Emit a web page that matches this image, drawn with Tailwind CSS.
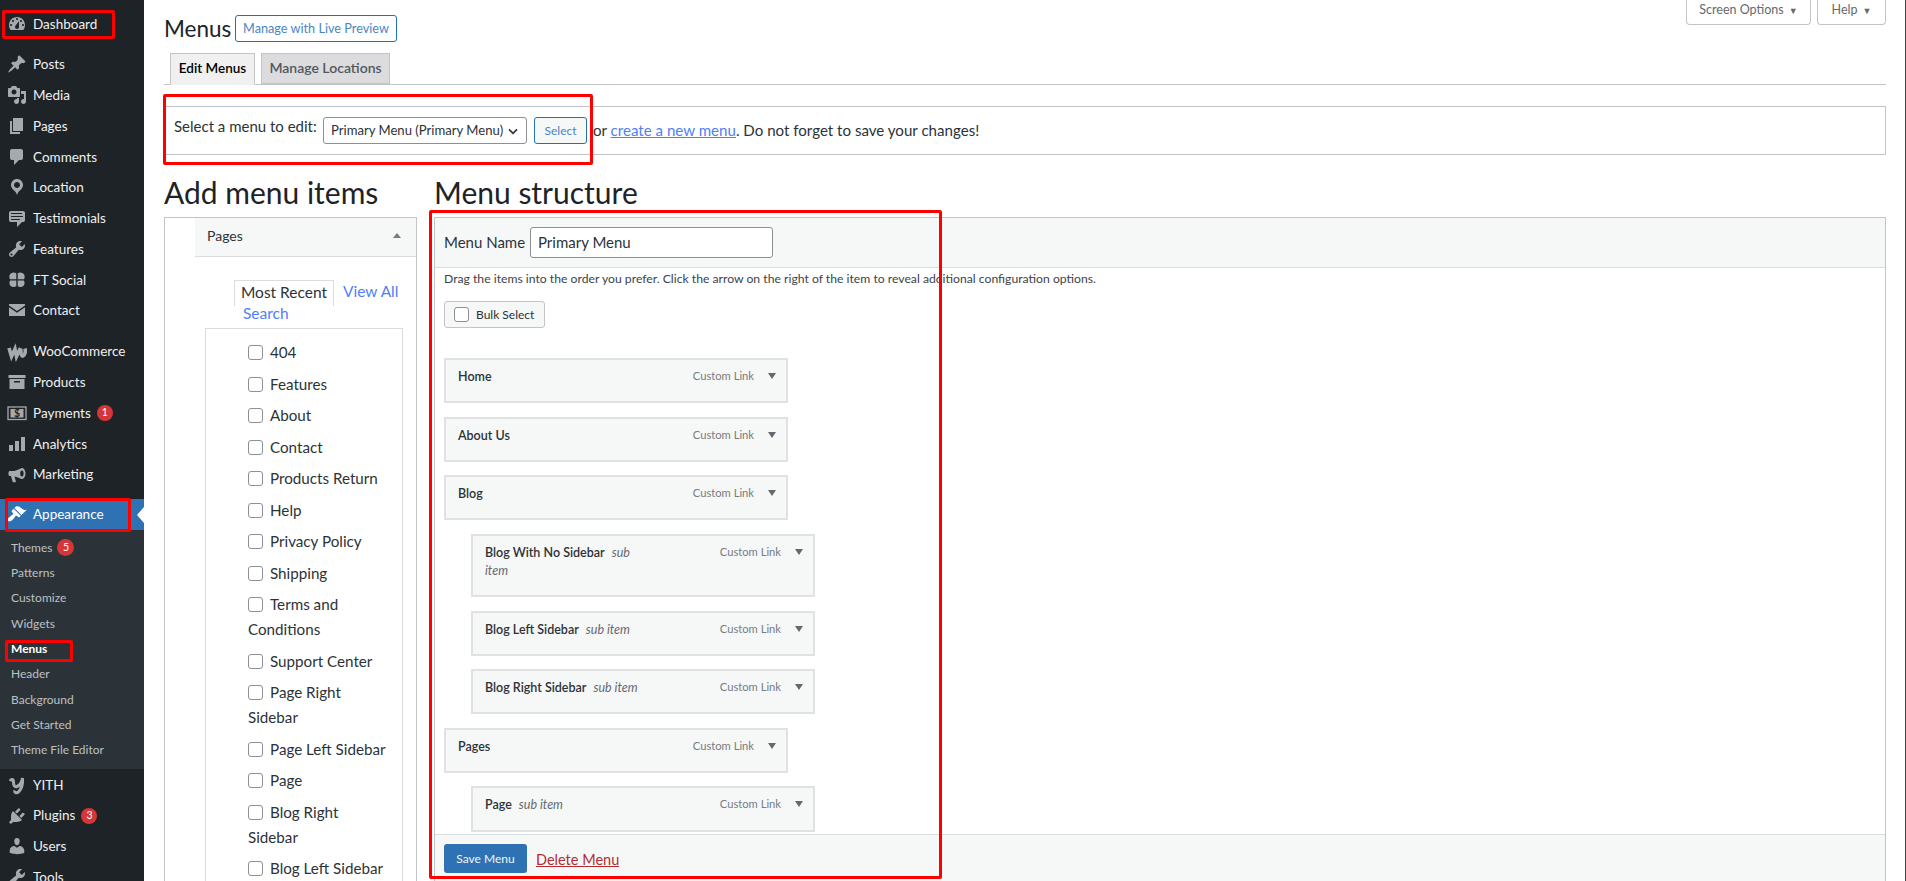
<!DOCTYPE html>
<html lang="en">
<head>
    <meta charset="UTF-8">
    <title>Menus</title>
    <script src="https://cdn.jsdelivr.net/npm/@tailwindcss/browser@4"></script>
</head>
<body class="bg-white font-['Lato',sans-serif] text-[#2c3338]">
<div class="relative flex h-[881px] w-[1906px] overflow-hidden border-r border-[#444]">

    <!-- sidebar -->
    <aside class="w-[144px] shrink-0 bg-[#1d2327] text-[13.5px] text-[#f0f0f1]">
        <div class="pt-[9px]"></div>
        <a class="flex h-[30.75px] items-center gap-[6px] pl-[7px]"><svg class="h-5 w-5 fill-[#a7aaad]" viewBox="0 0 20 20"><path fill-rule="evenodd" d="M3.76 16h12.48c1.1-1.37 1.76-3.11 1.76-5 0-4.42-3.58-8-8-8s-8 3.58-8 8c0 1.89.66 3.63 1.76 5zM10 4c.55 0 1 .45 1 1s-.45 1-1 1-1-.45-1-1 .45-1 1-1zM6 6c.55 0 1 .45 1 1s-.45 1-1 1-1-.45-1-1 .45-1 1-1zm8 0c.55 0 1 .45 1 1s-.45 1-1 1-1-.45-1-1 .45-1 1-1zm-5.37 5.55L12 7v6c0 1.1-.9 2-2 2s-2-.9-2-2c0-.57.24-1.08.63-1.45zM4 10c.55 0 1 .45 1 1s-.45 1-1 1-1-.45-1-1 .45-1 1-1zm12 0c.55 0 1 .45 1 1s-.45 1-1 1-1-.45-1-1 .45-1 1-1z"/></svg>Dashboard</a>
        <div class="h-[9.25px]"></div>
        <a class="flex h-[30.75px] items-center gap-[6px] pl-[7px]"><svg class="h-5 w-5 fill-[#a7aaad]" viewBox="0 0 20 20"><path d="M10.44 3.02l1.82-1.82 6.36 6.35-1.83 1.82c-1.05-.68-2.48-.57-3.41.36l-.75.75c-.92.93-1.04 2.35-.35 3.41l-1.83 1.82-2.41-2.41-2.8 2.79c-.42.42-3.38 2.71-3.8 2.29s1.86-3.39 2.28-3.81l2.79-2.79L4.1 9.36l1.83-1.82c1.05.69 2.48.57 3.4-.36l.75-.75c.93-.92 1.05-2.35.36-3.41z"/></svg>Posts</a>
        <a class="flex h-[30.75px] items-center gap-[6px] pl-[7px]"><svg class="h-5 w-5 fill-[#a7aaad]" viewBox="0 0 20 20"><path fill-rule="evenodd" d="M13 11V4c0-.55-.45-1-1-1h-1.67L9 1H5L3.67 3H2c-.55 0-1 .45-1 1v7c0 .55.45 1 1 1h10c.55 0 1-.45 1-1zM7 4.5c1.38 0 2.5 1.12 2.5 2.5S8.38 9.5 7 9.5 4.5 8.38 4.5 7 5.62 4.5 7 4.5zM14 6h5v10.5c0 1.38-1.12 2.5-2.5 2.5S14 17.88 14 16.5s1.12-2.5 2.5-2.5c.17 0 .34.02.5.05V9h-3V6zm-4 8.05V13h2v3.5c0 1.38-1.12 2.5-2.5 2.5S7 17.88 7 16.5 8.12 14 9.5 14c.17 0 .34.02.5.05z"/></svg>Media</a>
        <a class="flex h-[30.75px] items-center gap-[6px] pl-[7px]"><svg class="h-5 w-5 fill-[#a7aaad]" viewBox="0 0 20 20"><path d="M6 15V2h10v13H6zm-1 1h8v2H3V5h2v11z"/></svg>Pages</a>
        <a class="flex h-[30.75px] items-center gap-[6px] pl-[7px]"><svg class="h-5 w-5 fill-[#a7aaad]" viewBox="0 0 20 20"><path d="M5 2h9c1.1 0 2 .9 2 2v7c0 1.1-.9 2-2 2h-2l-5 5v-5H5c-1.1 0-2-.9-2-2V4c0-1.1.9-2 2-2z"/></svg>Comments</a>
        <a class="flex h-[30.75px] items-center gap-[6px] pl-[7px]"><svg class="h-5 w-5 fill-[#a7aaad]" viewBox="0 0 20 20"><path fill-rule="evenodd" d="M10 2C6.69 2 4 4.69 4 8c0 2.02 1.17 3.71 2.53 4.89.43.37 1.18.96 1.85 1.83.74.97 1.14 1.78 1.62 3.28.48-1.5.88-2.31 1.62-3.28.67-.87 1.42-1.46 1.85-1.83C14.83 11.71 16 10.02 16 8c0-3.31-2.69-6-6-6zm0 2.99c1.66 0 3 1.35 3 3.01 0 1.66-1.34 3-3 3s-3-1.34-3-3c0-1.66 1.34-3.01 3-3.01z"/></svg>Location</a>
        <a class="flex h-[30.75px] items-center gap-[6px] pl-[7px]"><svg class="h-5 w-5 fill-[#a7aaad]" viewBox="0 0 20 20"><path fill-rule="evenodd" d="M4 3h12c.55 0 1.02.2 1.41.59S18 4.45 18 5v7c0 .55-.2 1.02-.59 1.41S16.55 14 16 14h-1l-5 5v-5H4c-.55 0-1.02-.2-1.41-.59S2 12.55 2 12V5c0-.55.2-1.02.59-1.41S3.45 3 4 3zm11 2H4v1h11V5zm1 3H4v1h12V8zm-3 3H4v1h9v-1z"/></svg>Testimonials</a>
        <a class="flex h-[30.75px] items-center gap-[6px] pl-[7px]"><svg class="h-5 w-5 fill-[#a7aaad]" viewBox="0 0 20 20"><path fill-rule="evenodd" d="M16.68 9.77c-1.34 1.34-3.3 1.67-4.95.99l-5.41 6.52c-.99.99-2.59.99-3.58 0s-.99-2.59 0-3.57l6.52-5.42c-.68-1.65-.35-3.61.99-4.95 1.28-1.28 3.12-1.62 4.72-1.06l-2.89 2.89 2.82 2.82 2.86-2.87c.53 1.58.18 3.39-1.08 4.65zM3.81 16.21c.4.39 1.04.39 1.43 0 .4-.4.4-1.04 0-1.43-.39-.4-1.03-.4-1.43 0-.39.39-.39 1.03 0 1.43z"/></svg>Features</a>
        <a class="flex h-[30.75px] items-center gap-[6px] pl-[7px]"><svg class="h-5 w-5 fill-[#a7aaad]" viewBox="0 0 20 20"><path d="M9.3 3.2C7 1.8 3.6 2.4 2.6 5c-.4 1.2-.3 3 .3 4.2h6.4zM10.7 3.2c2.3-1.4 5.7-.8 6.7 1.8.4 1.2.3 3-.3 4.2h-6.4zM9.3 10.4H3.1c-.9 1.6-.9 3.7.2 5.1 1.3 1.6 3.8 2 6 .8zM10.7 10.4h6.2c.9 1.6.9 3.7-.2 5.1-1.3 1.6-3.8 2-6 .8z"/></svg>FT Social</a>
        <a class="flex h-[30.75px] items-center gap-[6px] pl-[7px]"><svg class="h-5 w-5 fill-[#a7aaad]" viewBox="0 0 20 20"><path d="M2 4h16v1.4L10 11 2 5.4V4zm0 3.2l8 5.6 8-5.6V16H2V7.2z"/></svg>Contact</a>
        <div class="h-[10.4px]"></div>
        <a class="flex h-[30.75px] items-center gap-[6px] pl-[7px]"><svg class="h-5 w-5 fill-none stroke-[#a7aaad] stroke-[3.6]" viewBox="0 0 20 20"><path d="M2 6l2.500 8.500 3.500-7.500 1.500 7.500 4-8.500M14 6.500c-.5 4.500.5 8 2 7.500 1.800-.6 2.800-4.500 2-7.500"/></svg>WooCommerce</a>
        <a class="flex h-[30.75px] items-center gap-[6px] pl-[7px]"><svg class="h-5 w-5 fill-[#a7aaad]" viewBox="0 0 20 20"><path fill-rule="evenodd" d="M1.5 3h17v3h-17zM2.5 7h15v10h-15zM7 9v1.5h6V9z"/></svg>Products</a>
        <a class="flex h-[30.75px] items-center gap-[6px] pl-[7px]"><svg class="h-5 w-5" viewBox="0 0 20 20"><rect x="1" y="4" width="18" height="12.5" class="fill-none stroke-[#a7aaad] stroke-[1.3]"/><rect x="3.5" y="6" width="13" height="8.5" class="fill-[#a7aaad]"/><text x="10" y="13.800" text-anchor="middle" class="fill-[#1d2327] text-[10.500px] font-bold">$</text></svg><span>Payments</span><span class="flex h-[16px] w-[16px] items-center justify-center rounded-full bg-[#d63638] text-[10.500px] text-white">1</span></a>
        <a class="flex h-[30.75px] items-center gap-[6px] pl-[7px]"><svg class="h-5 w-5 fill-[#a7aaad]" viewBox="0 0 20 20"><path d="M2 11h4v6H2zM8 7h4v10H8zM14 3h4v14h-4z"/></svg>Analytics</a>
        <a class="flex h-[30.75px] items-center gap-[6px] pl-[7px]"><svg class="h-5 w-5 fill-[#a7aaad]" viewBox="0 0 20 20"><path fill-rule="evenodd" d="M18.500 8.500c0 3-1.600 5.500-3.600 5.500-.6 0-4-2-7.400-2.600l1.400 5.100c.1.400-.2.700-.6.700H6.200c-.3 0-.5-.2-.6-.4L4 11H3c-.8 0-1.500-.7-1.500-1.500v-2C1.500 6.700 2.200 6 3 6h4c3.500-.4 7.300-3 7.900-3 2 0 3.600 2.500 3.600 5.500zM14.900 5.500c-1 0-1.700 1.300-1.700 3s.7 3 1.700 3 1.700-1.300 1.700-3-.7-3-1.700-3z"/></svg>Marketing</a>
        <div class="h-[8.8px]"></div>
        <a class="relative flex h-[31px] items-center gap-[6px] bg-[#2f72b3] pl-[7px] text-white"><svg class="h-5 w-5 fill-white" viewBox="0 0 20 20"><path d="M14.48 11.06L7.41 3.99l1.5-1.5c.5-.56 2.3-.47 3.51.32 1.21.8 1.43 1.28 2.91 2.1 1.18.64 2.45 1.26 4.45.85zm-.71.71L6.7 4.7 4.93 6.47c-.39.39-.39 1.02 0 1.41l1.06 1.06c.39.39.39 1.03 0 1.42-.6.6-1.43 1.11-2.21 1.69-.35.26-.7.53-1.01.84C1.43 13.23 0 15.500 1.05 16.950c1.46 1.050 3.720-.38 5.060-1.720.31-.31.58-.66.84-1.010.58-.78 1.090-1.610 1.690-2.210.39-.39 1.020-.39 1.410 0l1.060 1.060c.39.39 1.020.39 1.410 0z"/></svg>Appearance<span class="absolute right-0 top-[8px] border-y-[8px] border-r-[7px] border-y-transparent border-r-white"></span></a>
        <div class="h-[239.8px] bg-[#2c3338] pt-[5.4px] pl-[11px] text-[12px] text-[#bcc0c4]">
            <a class="flex h-[25.3px] items-center gap-[5px]">Themes<span class="flex h-[17px] w-[17px] items-center justify-center rounded-full bg-[#d63638] text-[10.500px] text-white">5</span></a>
            <a class="flex h-[25.3px] items-center">Patterns</a>
            <a class="flex h-[25.3px] items-center">Customize</a>
            <a class="flex h-[25.3px] items-center">Widgets</a>
            <a class="flex h-[25.3px] items-center font-bold text-white">Menus</a>
            <a class="flex h-[25.3px] items-center">Header</a>
            <a class="flex h-[25.3px] items-center">Background</a>
            <a class="flex h-[25.3px] items-center">Get Started</a>
            <a class="flex h-[25.3px] items-center">Theme File Editor</a>
        </div>
        <a class="flex h-[30.75px] items-center gap-[6px] pl-[7px]"><svg class="h-5 w-5 fill-none stroke-[#a7aaad] stroke-[3]" viewBox="0 0 20 20"><path d="M3 6c1.500-2.500 3.500-2 3.500 1s1 5.500 3.500 4.500 5-4.500 5.500-8.500M15.500 3c.5 6.500-1 11-4 14-2 1.500-4.500.5-3.500-1.500"/></svg>YITH</a>
        <a class="flex h-[30.75px] items-center gap-[6px] pl-[7px]"><svg class="h-5 w-5 fill-[#a7aaad]" viewBox="0 0 20 20"><path d="M13.11 4.36L9.87 7.600 8 5.730l3.240-3.240c.35-.34 1.050-.2 1.560.32.52.51.66 1.210.31 1.550zm-8 1.770l.91-1.120 9.010 9.010-1.190.84c-.71.71-2.630 1.160-3.820 1.160H6.140L4.900 17.260c-.59.59-1.540.59-2.120 0-.59-.58-.59-1.530 0-2.120l1.240-1.240v-3.880c0-1.130.4-3.190 1.090-3.890zm7.260 3.970l3.240-3.240c.34-.35 1.040-.21 1.550.31.52.51.66 1.210.31 1.550l-3.240 3.250z"/></svg><span>Plugins</span><span class="flex h-[16px] w-[16px] items-center justify-center rounded-full bg-[#d63638] text-[10.500px] text-white">3</span></a>
        <a class="flex h-[30.75px] items-center gap-[6px] pl-[7px]"><svg class="h-5 w-5 fill-[#a7aaad]" viewBox="0 0 20 20"><path d="M10 9.250c-2.270 0-2.730-3.440-2.730-3.440C7 4.020 7.820 2 9.970 2c2.160 0 2.980 2.020 2.710 3.810 0 0-.41 3.440-2.680 3.440zm0 2.570L12.720 10c2.390 0 4.520 2.330 4.520 4.530v2.490s-3.650 1.130-7.240 1.130c-3.650 0-7.240-1.130-7.240-1.130v-2.490c0-2.250 1.940-4.480 4.470-4.480z"/></svg>Users</a>
        <a class="flex h-[30.75px] items-center gap-[6px] pl-[7px]"><svg class="h-5 w-5 fill-[#a7aaad]" viewBox="0 0 20 20"><path fill-rule="evenodd" d="M16.680 9.770c-1.340 1.340-3.300 1.670-4.950.99l-5.410 6.520c-.99.99-2.590.99-3.580 0s-.99-2.590 0-3.570l6.520-5.420c-.68-1.650-.35-3.610.99-4.950 1.280-1.280 3.120-1.620 4.720-1.060l-2.890 2.890 2.820 2.820 2.860-2.870c.53 1.580.18 3.390-1.080 4.650z"/></svg>Tools</a>
    </aside>

    <!-- content -->
    <main class="w-[1761px] shrink-0 pl-[20px] pr-[19px]">
        <div class="flex h-[53px] items-start">
            <h1 class="mt-[16px] w-[71px] text-[22.500px] leading-[26px] text-[#1d2327]">Menus</h1>
            <a class="mt-[15px] flex h-[27px] w-[162px] items-center justify-center rounded-[3px] border border-[#2271b1] text-[12.700px] text-[#4a86c5]">Manage with Live Preview</a>
            <a class="ml-auto flex h-[25px] w-[125px] items-center justify-center gap-[5px] rounded-b-[4px] border border-t-0 border-[#c3c4c7] pb-[3px] text-[12.500px] text-[#646970]">Screen Options <span class="text-[9px]">▼</span></a>
            <a class="ml-[6px] flex h-[25px] w-[69px] items-center justify-center gap-[5px] rounded-b-[4px] border border-t-0 border-[#c3c4c7] pb-[3px] text-[12.500px] text-[#646970]">Help <span class="text-[9px]">▼</span></a>
        </div>

        <div class="flex h-[32px] border-b border-[#c3c4c7] pl-[6px]">
            <a class="flex h-[32px] w-[85px] items-center justify-center border border-[#c3c4c7] border-b-[#f0f0f1] bg-[#f0f0f1] pb-[2px] text-[13.500px] font-semibold text-black">Edit Menus</a>
            <a class="ml-[6px] flex h-[31px] w-[129px] items-center justify-center border border-[#c3c4c7] bg-[#dcdcde] pb-[2px] text-[14px] font-semibold text-[#50575e]">Manage Locations</a>
        </div>

        <div class="mt-[21px] flex h-[49px] items-center border border-[#c3c4c7] pl-[9px] text-[15.100px] text-[#2c3338]">
            <span class="mb-[9px] w-[149px] whitespace-nowrap text-[15px]">Select a menu to edit:</span>
            <div class="flex h-[27px] w-[204px] items-center justify-between whitespace-nowrap rounded-[3px] border border-[#8c8f94] pl-[7px] pr-[5px] text-[13.100px] text-[#2c3338]">Primary Menu (Primary Menu)<svg class="h-4 w-4 shrink-0 fill-none stroke-[#2c3338] stroke-[2]" viewBox="0 0 20 20"><path d="M5 8l5 5 5-5"/></svg></div>
            <a class="ml-[7px] flex h-[27px] w-[53px] items-center justify-center rounded-[3px] border border-[#2271b1] bg-[#f6f7f7] text-[12px] text-[#4a86c5]">Select</a>
            <span class="ml-[6px]">or <a class="text-[#4f80f7] underline">create a new menu</a>. Do not forget to save your changes!</span>
        </div>

        <div class="mt-[21px] flex gap-[17px]">
            <section class="w-[253px] shrink-0">
                <h2 class="h-[41px] text-[30px] leading-[33px] text-[#1d2327]">Add menu items</h2>
                <div class="h-[700px] border border-[#c3c4c7] pl-[30px]">
                    <div class="flex h-[39px] items-center justify-between border-b border-[#dcdcde] bg-[#f6f7f7] pb-[3px] pl-[12px] pr-[15px] text-[14px] text-[#2c3338]">Pages<span class="border-x-[4px] border-b-[5px] border-x-transparent border-b-[#787c82]"></span></div>
                    <div class="ml-[39px] mt-[23px] flex h-[26px] items-start text-[15.500px]">
                        <span class="flex h-[26px] w-[100px] items-center justify-center border border-b-0 border-[#dcdcde] pb-[2px] text-[#2c3338]">Most Recent</span>
                        <a class="ml-[9px] leading-[22px] text-[#4f80f7]">View All</a>
                    </div>
                    <a class="ml-[48px] block h-[22px] text-[15.500px] leading-[14px] text-[#4f80f7]">Search</a>
                    <div class="ml-[10px] h-[560px] w-[198px] border border-[#dcdcde] pl-[42px] pt-[11px] text-[15.200px] leading-[25px] text-[#2c3338]">
                        <label class="mb-[6.500px] block"><input type="checkbox" class="mr-[7px] inline-block h-[15px] w-[15px] appearance-none rounded-[3px] border border-[#8c8f94] bg-white align-[-2px]">404</label>
                        <label class="mb-[6.500px] block"><input type="checkbox" class="mr-[7px] inline-block h-[15px] w-[15px] appearance-none rounded-[3px] border border-[#8c8f94] bg-white align-[-2px]">Features</label>
                        <label class="mb-[6.500px] block"><input type="checkbox" class="mr-[7px] inline-block h-[15px] w-[15px] appearance-none rounded-[3px] border border-[#8c8f94] bg-white align-[-2px]">About</label>
                        <label class="mb-[6.500px] block"><input type="checkbox" class="mr-[7px] inline-block h-[15px] w-[15px] appearance-none rounded-[3px] border border-[#8c8f94] bg-white align-[-2px]">Contact</label>
                        <label class="mb-[6.500px] block"><input type="checkbox" class="mr-[7px] inline-block h-[15px] w-[15px] appearance-none rounded-[3px] border border-[#8c8f94] bg-white align-[-2px]">Products Return</label>
                        <label class="mb-[6.500px] block"><input type="checkbox" class="mr-[7px] inline-block h-[15px] w-[15px] appearance-none rounded-[3px] border border-[#8c8f94] bg-white align-[-2px]">Help</label>
                        <label class="mb-[6.500px] block"><input type="checkbox" class="mr-[7px] inline-block h-[15px] w-[15px] appearance-none rounded-[3px] border border-[#8c8f94] bg-white align-[-2px]">Privacy Policy</label>
                        <label class="mb-[6.500px] block"><input type="checkbox" class="mr-[7px] inline-block h-[15px] w-[15px] appearance-none rounded-[3px] border border-[#8c8f94] bg-white align-[-2px]">Shipping</label>
                        <label class="mb-[6.500px] block"><input type="checkbox" class="mr-[7px] inline-block h-[15px] w-[15px] appearance-none rounded-[3px] border border-[#8c8f94] bg-white align-[-2px]">Terms and<br>Conditions</label>
                        <label class="mb-[6.500px] block"><input type="checkbox" class="mr-[7px] inline-block h-[15px] w-[15px] appearance-none rounded-[3px] border border-[#8c8f94] bg-white align-[-2px]">Support Center</label>
                        <label class="mb-[6.500px] block"><input type="checkbox" class="mr-[7px] inline-block h-[15px] w-[15px] appearance-none rounded-[3px] border border-[#8c8f94] bg-white align-[-2px]">Page Right<br>Sidebar</label>
                        <label class="mb-[6.500px] block"><input type="checkbox" class="mr-[7px] inline-block h-[15px] w-[15px] appearance-none rounded-[3px] border border-[#8c8f94] bg-white align-[-2px]">Page Left Sidebar</label>
                        <label class="mb-[6.500px] block"><input type="checkbox" class="mr-[7px] inline-block h-[15px] w-[15px] appearance-none rounded-[3px] border border-[#8c8f94] bg-white align-[-2px]">Page</label>
                        <label class="mb-[6.500px] block"><input type="checkbox" class="mr-[7px] inline-block h-[15px] w-[15px] appearance-none rounded-[3px] border border-[#8c8f94] bg-white align-[-2px]">Blog Right<br>Sidebar</label>
                        <label class="mb-[6.500px] block"><input type="checkbox" class="mr-[7px] inline-block h-[15px] w-[15px] appearance-none rounded-[3px] border border-[#8c8f94] bg-white align-[-2px]">Blog Left Sidebar</label>
                    </div>
                </div>
            </section>

            <section class="w-[1452px] shrink-0">
                <h2 class="h-[41px] text-[30px] leading-[33px] text-[#1d2327]">Menu structure</h2>
                <div class="h-[700px] border border-[#c3c4c7]">
                    <div class="flex h-[50px] items-center border-b border-[#dcdcde] bg-[#f6f7f7] pl-[9px]">
                        <span class="mb-[1px] w-[86px] text-[15px]">Menu Name</span>
                        <input value="Primary Menu" class="h-[31px] w-[243px] rounded-[3px] border border-[#8c8f94] bg-white px-[7px] pb-[2px] text-[15px] text-[#2c3338]">
                    </div>
                    <p class="ml-[9px] mt-[1px] h-[32px] text-[12.200px] leading-[20px] text-[#3c434a]">Drag the items into the order you prefer. Click the arrow on the right of the item to reveal additional configuration options.</p>
                    <div class="ml-[9px] flex h-[27px] w-[101px] items-center rounded-[3px] border border-[#c3c4c7] bg-[#f6f7f7] pl-[9px] text-[12px]"><input type="checkbox" class="mr-[7px] h-[15px] w-[15px] appearance-none rounded-[3px] border border-[#8c8f94] bg-white">Bulk Select</div>

                    <div class="mt-[30px] pl-[9px]">
                        <div class="flex h-[45px] w-[344px] items-start justify-between border-2 border-[#e0e1e2] bg-[#f6f7f7] pl-[12px] pr-[10px] pt-[8px] text-[12.500px]"><b class="font-semibold text-[#2c3338]">Home</b><span class="flex items-center gap-[14px] text-[11.200px] text-[#787c82]">Custom Link<i class="border-x-[4.500px] border-t-[6px] border-x-transparent border-t-[#646970]"></i></span></div>
                        <div class="mt-[13.500px] flex h-[45px] w-[344px] items-start justify-between border-2 border-[#e0e1e2] bg-[#f6f7f7] pl-[12px] pr-[10px] pt-[8px] text-[12.500px]"><b class="font-semibold text-[#2c3338]">About Us</b><span class="flex items-center gap-[14px] text-[11.200px] text-[#787c82]">Custom Link<i class="border-x-[4.500px] border-t-[6px] border-x-transparent border-t-[#646970]"></i></span></div>
                        <div class="mt-[13.500px] flex h-[45px] w-[344px] items-start justify-between border-2 border-[#e0e1e2] bg-[#f6f7f7] pl-[12px] pr-[10px] pt-[8px] text-[12.500px]"><b class="font-semibold text-[#2c3338]">Blog</b><span class="flex items-center gap-[14px] text-[11.200px] text-[#787c82]">Custom Link<i class="border-x-[4.500px] border-t-[6px] border-x-transparent border-t-[#646970]"></i></span></div>
                        <div class="ml-[27px] mt-[13.500px] flex h-[63.500px] w-[344px] items-start justify-between border-2 border-[#e0e1e2] bg-[#f6f7f7] pl-[12px] pr-[10px] pt-[8px] text-[12.500px]"><div class="leading-[18px]"><b class="font-semibold text-[#2c3338]">Blog With No Sidebar</b><i class="ml-[7px] text-[#646970]">sub<br>item</i></div><span class="flex items-center gap-[14px] text-[11.200px] text-[#787c82]">Custom Link<i class="border-x-[4.500px] border-t-[6px] border-x-transparent border-t-[#646970]"></i></span></div>
                        <div class="ml-[27px] mt-[13.500px] flex h-[45px] w-[344px] items-start justify-between border-2 border-[#e0e1e2] bg-[#f6f7f7] pl-[12px] pr-[10px] pt-[8px] text-[12.500px]"><div><b class="font-semibold text-[#2c3338]">Blog Left Sidebar</b><i class="ml-[7px] text-[#646970]">sub item</i></div><span class="flex items-center gap-[14px] text-[11.200px] text-[#787c82]">Custom Link<i class="border-x-[4.500px] border-t-[6px] border-x-transparent border-t-[#646970]"></i></span></div>
                        <div class="ml-[27px] mt-[13.500px] flex h-[45px] w-[344px] items-start justify-between border-2 border-[#e0e1e2] bg-[#f6f7f7] pl-[12px] pr-[10px] pt-[8px] text-[12.500px]"><div><b class="font-semibold text-[#2c3338]">Blog Right Sidebar</b><i class="ml-[7px] text-[#646970]">sub item</i></div><span class="flex items-center gap-[14px] text-[11.200px] text-[#787c82]">Custom Link<i class="border-x-[4.500px] border-t-[6px] border-x-transparent border-t-[#646970]"></i></span></div>
                        <div class="mt-[13.500px] flex h-[45px] w-[344px] items-start justify-between border-2 border-[#e0e1e2] bg-[#f6f7f7] pl-[12px] pr-[10px] pt-[8px] text-[12.500px]"><b class="font-semibold text-[#2c3338]">Pages</b><span class="flex items-center gap-[14px] text-[11.200px] text-[#787c82]">Custom Link<i class="border-x-[4.500px] border-t-[6px] border-x-transparent border-t-[#646970]"></i></span></div>
                        <div class="ml-[27px] mt-[13.500px] flex h-[46px] w-[344px] items-start justify-between border-2 border-[#e0e1e2] bg-[#f6f7f7] pl-[12px] pr-[10px] pt-[8px] text-[12.500px]"><div><b class="font-semibold text-[#2c3338]">Page</b><i class="ml-[7px] text-[#646970]">sub item</i></div><span class="flex items-center gap-[14px] text-[11.200px] text-[#787c82]">Custom Link<i class="border-x-[4.500px] border-t-[6px] border-x-transparent border-t-[#646970]"></i></span></div>
                    </div>

                    <div class="mt-[2px] flex h-[100px] items-start border-t border-[#dcdcde] bg-[#f6f7f7] pl-[9px] pt-[9px]">
                        <a class="flex h-[29px] w-[83px] items-center justify-center rounded-[3px] bg-[#2f72b3] text-[12px] text-[#f0f6fc]">Save Menu</a>
                        <a class="ml-[9px] mt-[5px] text-[14.500px] text-[#b32d2e] underline">Delete Menu</a>
                    </div>
                </div>
            </section>
        </div>
    </main>

    <!-- red annotation boxes drawn over the screenshot -->
    <div class="absolute left-[2px] top-[10px] h-[29px] w-[113px] rounded-[2px] border-[3px] border-[#f00]"></div>
    <div class="absolute left-[5px] top-[498px] h-[34px] w-[126px] rounded-[2px] border-[3px] border-[#f00]"></div>
    <div class="absolute left-[5px] top-[640px] h-[22px] w-[68px] rounded-[2px] border-[3px] border-[#f00]"></div>
    <div class="absolute left-[163px] top-[94px] h-[71px] w-[430px] rounded-[2px] border-[3px] border-[#f00]"></div>
    <div class="absolute left-[429px] top-[210px] h-[669px] w-[513px] rounded-[2px] border-[3px] border-[#f00]"></div>
</div>
</body>
</html>
